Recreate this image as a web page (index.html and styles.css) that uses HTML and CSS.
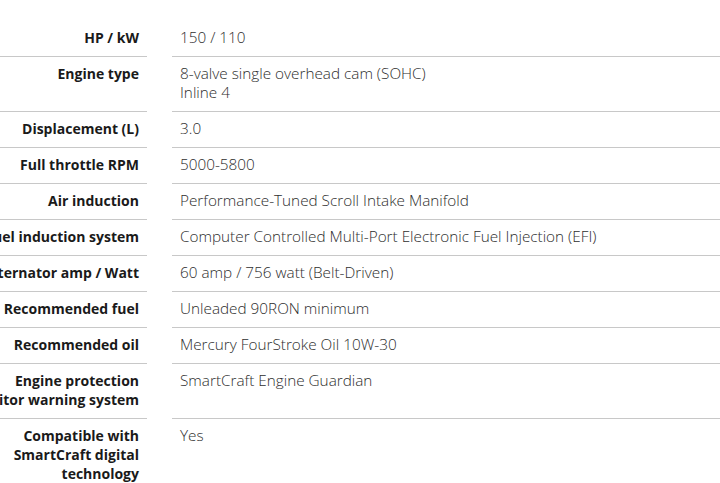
FILE: index.html
```html
<!DOCTYPE html>
<html>
<head>
<meta charset="utf-8">
<link rel="stylesheet" href="styles.css">
</head>
<body>
<div class="specs">
  <div class="label">HP / kW</div><div class="value">150 / 110</div>
  <div class="label">Engine type</div><div class="value">8-valve single overhead cam (SOHC)<br>Inline 4</div>
  <div class="label">Displacement (L)</div><div class="value">3.0</div>
  <div class="label">Full throttle RPM</div><div class="value">5000-5800</div>
  <div class="label">Air induction</div><div class="value">Performance-Tuned Scroll Intake Manifold</div>
  <div class="label">Fuel induction system</div><div class="value">Computer Controlled Multi-Port Electronic Fuel Injection (EFI)</div>
  <div class="label">Alternator amp / Watt</div><div class="value">60 amp / 756 watt (Belt-Driven)</div>
  <div class="label">Recommended fuel</div><div class="value">Unleaded 90RON minimum</div>
  <div class="label">Recommended oil</div><div class="value">Mercury FourStroke Oil 10W-30</div>
  <div class="label">Engine protection<br>monitor warning system</div><div class="value">SmartCraft Engine Guardian</div>
  <div class="label last">Compatible with<br>SmartCraft digital<br>technology</div><div class="value last">Yes</div>
</div>
</body>
</html>
```
FILE: styles.css
```css
html, body {
  margin: 0;
  padding: 0;
  background: #fff;
  overflow: hidden;
}
body {
  padding-top: 21px;
}
.specs {
  display: grid;
  grid-template-columns: 207px 1fr;
  column-gap: 25px;
  margin-left: -60px;
  font-family: "Open Sans", "Liberation Sans", sans-serif;
  font-size: 14px;
  line-height: 19px;
}
.label, .value {
  padding: 7px 8px 9px 8px;
  border-bottom: 1px solid #c8c8c8;
}
.label {
  text-align: right;
  font-weight: 700;
  color: #1a1a1a;
  white-space: nowrap;
}
.value {
  font-weight: 300;
  color: #2e2e2e;
  font-size: 15.3px;
}
.last {
  border-bottom: none;
}
```
